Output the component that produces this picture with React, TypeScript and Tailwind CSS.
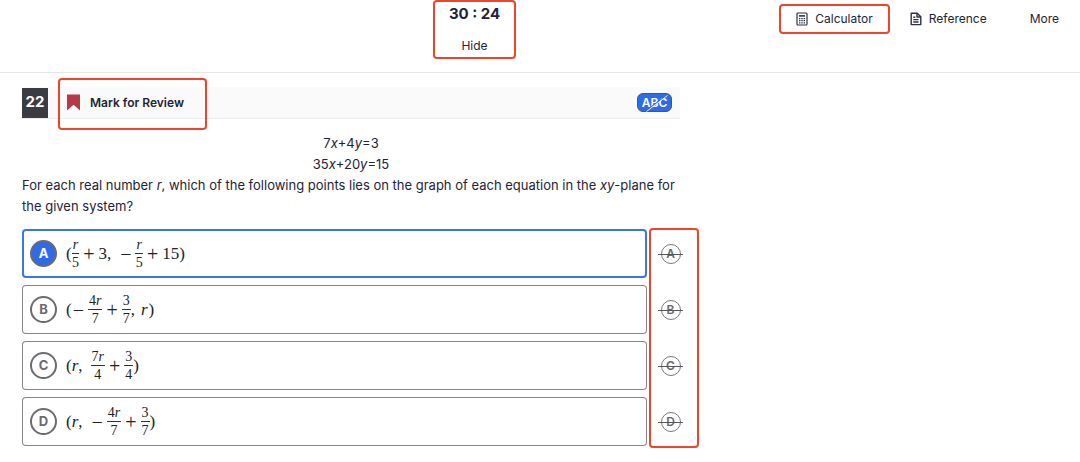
import { useState } from "react";
import type { ReactNode } from "react";

const RED_FRAME = "rounded border-2 border-[#f0442a]";

function CalculatorIcon() {
  return (
    <svg viewBox="0 0 12 14" className="h-3.5 w-3" fill="none" stroke="#2b3147" aria-hidden="true">
      <rect x="1" y="1" width="10" height="12" rx="1" strokeWidth="1.2" />
      <path d="M3 3.9h6" strokeWidth="1.6" />
      <path d="M3 6.6h1.4M5.3 6.6h1.4M7.6 6.6H9M3 8.7h1.4M5.3 8.7h1.4M7.6 8.7H9M3 10.9h1.4M5.3 10.9h1.4M7.6 10.9H9" strokeWidth="1.3" />
    </svg>
  );
}

function DocumentIcon() {
  return (
    <svg viewBox="0 0 12 14" className="h-3.5 w-3" fill="none" stroke="#2b3147" strokeWidth="1.4" strokeLinejoin="round" aria-hidden="true">
      <path d="M1.2 1.2h6l3.6 3.6v7.8H1.2z" />
      <path d="M7 1.2v3.8h3.8" />
      <path d="M3.3 5.2h2M3.3 7.6h5.2M3.3 10h5.2" />
    </svg>
  );
}

function Fraction({ top, bottom }: { top: ReactNode; bottom: ReactNode }) {
  return (
    <span className="inline-flex flex-col items-center text-sm leading-[17px]">
      <span className="border-b border-[#333] px-px">{top}</span>
      <span>{bottom}</span>
    </span>
  );
}

function Op({ children }: { children: ReactNode }) {
  return <span className="mx-1 text-xl leading-6">{children}</span>;
}

function Minus() {
  return <span className="mr-1 ml-px text-xl leading-6">−</span>;
}

const choices: { id: string; math: ReactNode }[] = [
  {
    id: "A",
    math: (
      <>
        (<Fraction top={<i>r</i>} bottom="5" />
        <Op>+</Op>
        <span className="mr-2">3,</span>
        <Minus />
        <Fraction top={<i>r</i>} bottom="5" />
        <Op>+</Op>15)
      </>
    ),
  },
  {
    id: "B",
    math: (
      <>
        (<Minus />
        <Fraction top={<>4<i>r</i></>} bottom="7" />
        <Op>+</Op>
        <Fraction top="3" bottom="7" />
        <span className="mr-1.5">,</span>
        <i>r</i>
        <span className="ml-px">)</span>
      </>
    ),
  },
  {
    id: "C",
    math: (
      <>
        (<i>r</i>
        <span className="mr-2">,</span>
        <Fraction top={<>7<i>r</i></>} bottom="4" />
        <Op>+</Op>
        <Fraction top="3" bottom="4" />)
      </>
    ),
  },
  {
    id: "D",
    math: (
      <>
        (<i>r</i>
        <span className="mr-2">,</span>
        <Minus />
        <Fraction top={<>4<i>r</i></>} bottom="7" />
        <Op>+</Op>
        <Fraction top="3" bottom="7" />)
      </>
    ),
  },
];

export default function App() {
  const [selected, setSelected] = useState("A");

  return (
    <div className="bg-white font-['Inter','Liberation_Sans',sans-serif] text-[#1e2338]">
      <header className="grid grid-cols-[433fr_auto_564fr] items-start border-b border-[#e6e6e8] pb-[13px]">
        <span />
        <div className={`flex flex-col items-center px-3.5 pt-0.5 pb-px ${RED_FRAME}`}>
          <time className="text-[15px] leading-5 font-bold">30 : 24</time>
          <button type="button" className="mt-3 text-xs leading-5">Hide</button>
        </div>
        <nav className="flex items-center justify-end pt-1 pr-[21px] text-xs">
          <button type="button" className={`flex h-[30px] items-center gap-[7px] px-[15px] ${RED_FRAME}`}>
            <CalculatorIcon />
            Calculator
          </button>
          <button type="button" className="ml-5 flex items-center gap-[7px]">
            <DocumentIcon />
            Reference
          </button>
          <button type="button" className="ml-[43px]">More</button>
        </nav>
      </header>

      <main className="max-w-[699px] pt-3.5 pl-[22px]">
        <div className="mr-[19px] flex h-8 items-center border-b border-[#ececec] bg-[#fafafa]">
          <h1 className="flex h-[30px] w-[26px] items-center justify-center bg-[#3b3b42] text-[15px] font-bold text-white">22</h1>
          <button type="button" className="relative ml-[19px] flex items-center gap-2.5 text-xs font-semibold">
            <svg viewBox="0 0 13 17" className="h-[17px] w-[13px]" aria-hidden="true">
              <path d="M0 .5h13v16L6.5 10.8 0 16.5z" fill="#b53a48" />
            </svg>
            Mark for Review
            <span className={`pointer-events-none absolute -inset-x-[9px] -top-4 -right-[23px] -bottom-[19px] ${RED_FRAME}`} />
          </button>
          <button
            type="button"
            className="relative mr-2 ml-auto flex h-[19px] w-[35px] items-center justify-center rounded-md border border-[#4b5570] bg-[#2f6be6] text-xs font-semibold text-white"
          >
            ABC
            <svg viewBox="0 0 35 19" className="absolute -inset-px h-[19px] w-[35px]" aria-hidden="true">
              <path d="M9 18 30 2" stroke="#2f6be6" strokeWidth="1.2" />
              <path d="M9.5 18.5 30.5 2.5" stroke="#fff" strokeWidth="0.9" />
            </svg>
          </button>
        </div>

        <section className="mr-[19px] mt-3.5 text-[13px] leading-[21px]">
          <p className="text-center">7<i>x</i>+4<i>y</i>=3</p>
          <p className="text-center">35<i>x</i>+20<i>y</i>=15</p>
          <p>
            For each real number <i>r</i>, which of the following points lies on the graph of each equation in the <i>xy</i>-plane for the given system?
          </p>
        </section>

        <div className="mt-[11px] grid grid-cols-[1fr_auto] gap-0.5">
          <div role="radiogroup" aria-label="Answer choices" className="flex flex-col gap-[7px] pt-px">
            {choices.map(({ id, math }) => {
              const active = id === selected;
              return (
                <label
                  key={id}
                  className={`relative flex h-[49px] cursor-pointer items-center gap-[9px] rounded pl-2 ${
                    active ? "ring-2 ring-[#3b75ec] ring-inset" : "ring-1 ring-[#858585] ring-inset"
                  }`}
                >
                  <input
                    type="radio"
                    name="answer"
                    value={id}
                    checked={active}
                    onChange={() => setSelected(id)}
                    className="sr-only"
                  />
                  <span
                    className={`flex size-[27px] items-center justify-center rounded-full border-2 border-[#6b6b70] text-[13px] font-bold ${
                      active ? "bg-[#2f6be6] text-white" : "text-[#6b6b70]"
                    }`}
                  >
                    {id}
                  </span>
                  <span className="flex items-center font-['Liberation_Serif',serif] text-[17px] text-[#222]">{math}</span>
                </label>
              );
            })}
          </div>
          <div className={`flex w-[50px] flex-col gap-2 pr-[7px] ${RED_FRAME}`}>
            {choices.map(({ id }) => (
              <button
                key={id}
                type="button"
                aria-label={`Eliminate ${id}`}
                className="relative flex h-12 items-center justify-center"
              >
                <span className="flex size-5 items-center justify-center rounded-full border border-[#77777c] text-xs font-semibold text-[#66666b]">
                  {id}
                </span>
                <span className="absolute inset-x-[7px] top-6 h-px bg-[#55555c]" />
              </button>
            ))}
          </div>
        </div>
      </main>
    </div>
  );
}
